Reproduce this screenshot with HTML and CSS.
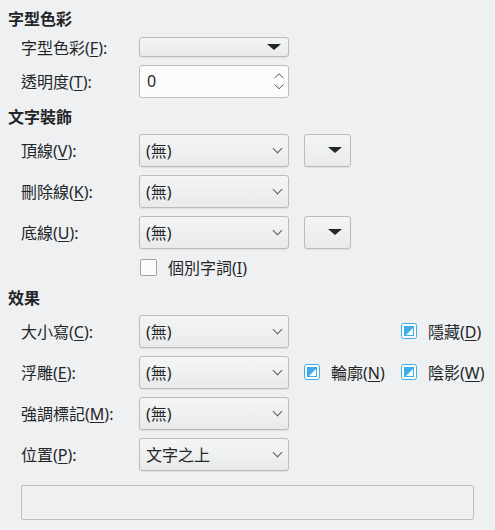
FILE: index.html
```html
<!DOCTYPE html>
<html>
<head>
<meta charset="utf-8">
<link rel="stylesheet" href="styles.css">
</head>
<body>
<div class="page">
  <div class="hdr h1">字型色彩</div>
  <div class="row r-color">
    <div class="lbl">字型色彩(<u>F</u>):</div>
    <div class="btn wide"><span class="tri"></span></div>
  </div>
  <div class="row r-spin">
    <div class="lbl">透明度(<u>T</u>):</div>
    <div class="spin">
      <span class="val">0</span>
      <span class="arrows">
        <svg width="10" height="17" viewBox="0 0 10 17"><path d="M0.5 5 L5 0.8 L9.5 5" fill="none" stroke="#4d5053" stroke-width="1"/><path d="M0.5 11.5 L5 15.7 L9.5 11.5" fill="none" stroke="#4d5053" stroke-width="1"/></svg>
      </span>
    </div>
  </div>

  <div class="hdr h2">文字裝飾</div>
  <div class="row r-first">
    <div class="lbl">頂線(<u>V</u>):</div>
    <div class="combo"><span>(無)</span><span class="chev"></span></div>
    <div class="btn small"><span class="tri"></span></div>
  </div>
  <div class="row">
    <div class="lbl">刪除線(<u>K</u>):</div>
    <div class="combo"><span>(無)</span><span class="chev"></span></div>
  </div>
  <div class="row">
    <div class="lbl">底線(<u>U</u>):</div>
    <div class="combo"><span>(無)</span><span class="chev"></span></div>
    <div class="btn small"><span class="tri"></span></div>
  </div>
  <div class="row r-check">
    <div class="lbl"></div>
    <label class="check"><span class="box"></span><span>個別字詞(<u>I</u>)</span></label>
  </div>

  <div class="hdr h3">效果</div>
  <div class="row r-first">
    <div class="lbl">大小寫(<u>C</u>):</div>
    <div class="combo"><span>(無)</span><span class="chev"></span></div>
    <label class="check far"><svg class="pbox" width="16" height="16" viewBox="0 0 16 16"><rect x="0.5" y="0.5" width="15" height="15" rx="2" fill="#fcfcfc" stroke="#3daee9"/><rect x="3" y="3" width="10" height="10" fill="#3daee9"/><polygon points="5,12 12,12 12,5" fill="#fcfcfc"/></svg><span>隱藏(<u>D</u>)</span></label>
  </div>
  <div class="row">
    <div class="lbl">浮雕(<u>E</u>):</div>
    <div class="combo"><span>(無)</span><span class="chev"></span></div>
    <label class="check col3"><svg class="pbox" width="16" height="16" viewBox="0 0 16 16"><rect x="0.5" y="0.5" width="15" height="15" rx="2" fill="#fcfcfc" stroke="#3daee9"/><rect x="3" y="3" width="10" height="10" fill="#3daee9"/><polygon points="5,12 12,12 12,5" fill="#fcfcfc"/></svg><span>輪廓(<u>N</u>)</span></label>
    <label class="check"><svg class="pbox" width="16" height="16" viewBox="0 0 16 16"><rect x="0.5" y="0.5" width="15" height="15" rx="2" fill="#fcfcfc" stroke="#3daee9"/><rect x="3" y="3" width="10" height="10" fill="#3daee9"/><polygon points="5,12 12,12 12,5" fill="#fcfcfc"/></svg><span>陰影(<u>W</u>)</span></label>
  </div>
  <div class="row">
    <div class="lbl">強調標記(<u>M</u>):</div>
    <div class="combo"><span>(無)</span><span class="chev"></span></div>
  </div>
  <div class="row">
    <div class="lbl">位置(<u>P</u>):</div>
    <div class="combo"><span>文字之上</span><span class="chev"></span></div>
  </div>

  <div class="preview"></div>
</div>
</body>
</html>
```

FILE: styles.css
```css
html, body {
  margin: 0;
  padding: 0;
  background: #eff0f1;
}
body {
  width: 495px;
  height: 530px;
  overflow: hidden;
  font-family: "Noto Sans", "Noto Sans CJK TC", sans-serif;
  font-size: 16px;
  color: #232629;
}
.page {
  display: flex;
  flex-direction: column;
  padding-left: 8px;
}
u {
  text-decoration: underline;
  text-underline-offset: 2px;
  text-decoration-thickness: 1px;
}
.hdr {
  font-weight: bold;
  height: 22px;
  line-height: 22px;
}
.h1 { margin-top: 8px; }
.h2 { margin-top: 9px; }
.h3 { margin-top: 11px; }

.row {
  display: flex;
  align-items: center;
  height: 32px;
  margin-top: 9px;
  padding-left: 13px;
}
.r-color { height: 20px; margin-top: 7px; }
.r-spin { margin-top: 8px; }
.r-first { margin-top: 6px; }
.r-check { height: 18px; margin-top: 10px; }

.lbl {
  width: 118px;
  flex: none;
  white-space: nowrap;
}

.btn, .combo {
  box-sizing: border-box;
  border: 1px solid #b9bbbd;
  border-radius: 3px;
  background: linear-gradient(#f4f5f5, #e9eaeb);
  box-shadow: 0 1px 1px rgba(0,0,0,0.08);
  position: relative;
  flex: none;
}
.btn.wide {
  width: 150px;
  height: 20px;
}
.btn.small {
  width: 47px;
  height: 33px;
  margin-left: 15px;
}
.tri {
  position: absolute;
  top: 50%;
  right: 7px;
  margin-top: -3px;
  width: 0;
  height: 0;
  border-left: 7px solid transparent;
  border-right: 7px solid transparent;
  border-top: 6px solid #232629;
}
.btn.small .tri { right: 8px; }

.combo {
  width: 150px;
  height: 33px;
  display: flex;
  align-items: center;
  padding-left: 6px;
  white-space: nowrap;
}
.chev {
  position: absolute;
  right: 7px;
  top: 50%;
  margin-top: -5px;
  width: 6px;
  height: 6px;
  border-right: 1px solid #5a5d60;
  border-bottom: 1px solid #5a5d60;
  transform: rotate(45deg);
}

.spin {
  box-sizing: border-box;
  width: 150px;
  height: 33px;
  border: 1px solid #bcbec0;
  border-radius: 3px;
  background: #fcfcfc;
  display: flex;
  align-items: center;
  justify-content: space-between;
  padding-left: 7px;
  padding-right: 4px;
  flex: none;
}
.arrows { display: flex; }

.check {
  display: flex;
  align-items: center;
  gap: 11px;
  white-space: nowrap;
  flex: none;
}
.box {
  box-sizing: border-box;
  width: 17px;
  height: 17px;
  border: 1px solid #9fa1a3;
  border-radius: 2px;
  background: #fcfcfc;
  margin-left: 1px;
}
.pbox { flex: none; }
.far { margin-left: 112px; }
.col3 { margin-left: 15px; width: 97px; }

.preview {
  box-sizing: border-box;
  margin-top: 15px;
  margin-left: 13px;
  width: 453px;
  height: 35px;
  border: 1px solid #bcbec0;
  border-radius: 2px;
  background: #eff0f1;
}
```
